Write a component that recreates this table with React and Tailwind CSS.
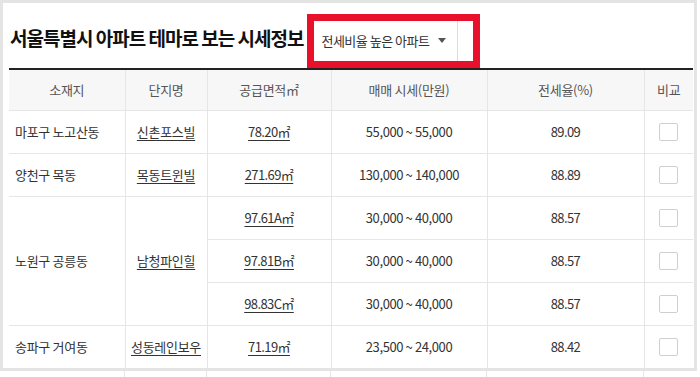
import React from "react";

const font = { fontFamily: '"Noto Sans CJK KR", "Noto Sans", sans-serif' };

const rows = [
  { loc: "마포구 노고산동", name: "신촌포스빌", areas: [["78.20㎡", "55,000 ~ 55,000", "89.09"]] },
  { loc: "양천구 목동", name: "목동트윈빌", areas: [["271.69㎡", "130,000 ~ 140,000", "88.89"]] },
  {
    loc: "노원구 공릉동",
    name: "남청파인힐",
    areas: [
      ["97.61A㎡", "30,000 ~ 40,000", "88.57"],
      ["97.81B㎡", "30,000 ~ 40,000", "88.57"],
      ["98.83C㎡", "30,000 ~ 40,000", "88.57"],
    ],
  },
  { loc: "송파구 거여동", name: "성동레인보우", areas: [["71.19㎡", "23,500 ~ 24,000", "88.42"]] },
];

function Check() {
  return <div className="mx-auto w-[19px] h-[18px] border border-[#cfcfcf] rounded-[2px] bg-white" />;
}

export default function App() {
  const td = "border border-[#e6e6e6] text-[13px] text-[#333] text-center tracking-[-0.3px]";
  return (
    <div className="w-[700px] h-[377px] overflow-hidden bg-white" style={font}>
      <div className="w-[697px] h-[371px] border-[3px] border-[#e4e4e4] bg-white overflow-hidden">
        <div className="flex items-center pl-[7px] pt-[10px] h-[65px]">
          <h1 className="text-[19px] font-bold text-[#111] tracking-[-1px] leading-none mt-[-6px]">
            서울특별시 아파트 테마로 보는 시세정보
          </h1>
          <div className="ml-[4px] w-[173px] h-[54px] border-[7px] border-[#e8102b] bg-white flex">
            <div className="w-[144px] h-full border-r border-[#dcdcdc] flex items-center pl-[7px]">
              <span className="text-[13px] text-[#333] tracking-[-0.5px]">전세비율 높은 아파트</span>
              <svg className="ml-[9px]" width="8" height="5" viewBox="0 0 8 5">
                <path d="M0 0H8L4 5Z" fill="#555" />
              </svg>
            </div>
          </div>
        </div>
        <table className="ml-[6px] w-[684px] border-collapse table-fixed border-t-2 border-t-[#222]">
          <colgroup>
            <col className="w-[116px]" />
            <col className="w-[82px]" />
            <col className="w-[124px]" />
            <col className="w-[156px]" />
            <col className="w-[157px]" />
            <col className="w-[49px]" />
          </colgroup>
          <thead>
            <tr className="h-[41px] bg-[#f7f7f7]">
              {["소재지", "단지명", "공급면적㎡", "매매 시세(만원)", "전세율(%)", "비교"].map((h, i) => (
                <th
                  key={i}
                  className={`border border-[#e6e6e6] border-t-0 text-[13px] font-normal text-[#555] text-center tracking-[-0.3px] ${i === 0 ? "border-l-0" : ""} ${i === 5 ? "border-r-0" : ""}`}
                >
                  {h}
                </th>
              ))}
            </tr>
          </thead>
          <tbody>
            {rows.map((r, ri) =>
              r.areas.map((a, ai) => (
                <tr key={`${ri}-${ai}`} className="h-[43px]">
                  {ai === 0 && (
                    <>
                      <td rowSpan={r.areas.length} className={`${td} !text-left pl-[6px] border-l-0`}>
                        {r.loc}
                      </td>
                      <td rowSpan={r.areas.length} className={td}>
                        <span className="underline underline-offset-[3px]">{r.name}</span>
                      </td>
                    </>
                  )}
                  <td className={td}>
                    <span className="underline underline-offset-[3px] tracking-[-0.6px]">{a[0]}</span>
                  </td>
                  <td className={`${td} tracking-[-0.4px]`}>{a[1]}</td>
                  <td className={`${td} tracking-[-0.6px]`}>{a[2]}</td>
                  <td className={`${td} border-r-0`}>
                    <Check />
                  </td>
                </tr>
              ))
            )}
          </tbody>
        </table>
      </div>
      <div className="flex h-[6px] ml-[9px]">
        <div className="w-[116px] border-r border-[#e6e6e6]" />
        <div className="w-[82px] border-r border-[#e6e6e6]" />
        <div className="w-[124px] border-r border-[#e6e6e6]" />
        <div className="w-[156px] border-r border-[#e6e6e6]" />
        <div className="w-[157px] border-r border-[#e6e6e6]" />
        <div className="w-[49px]" />
      </div>
    </div>
  );
}
